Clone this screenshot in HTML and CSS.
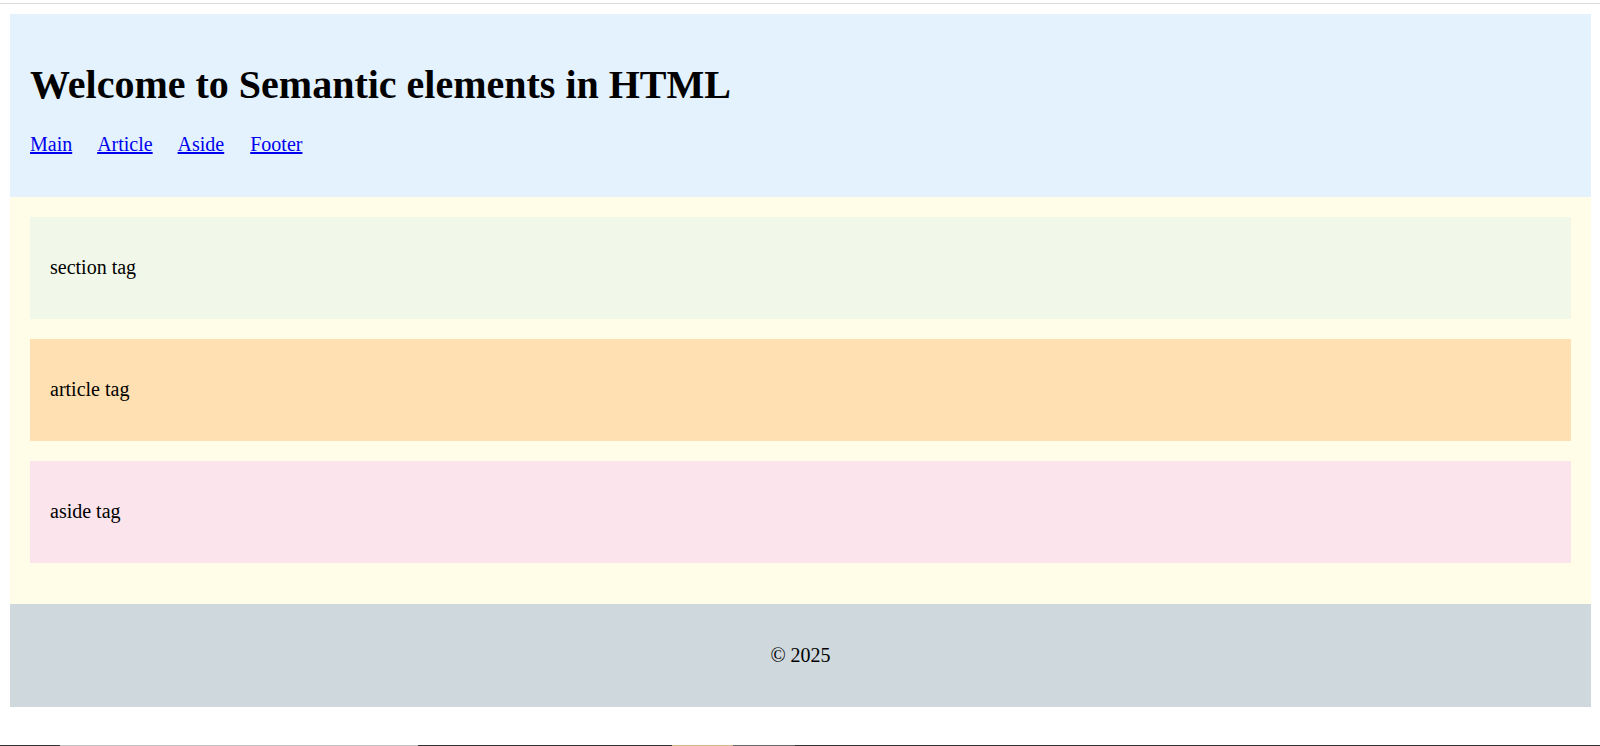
FILE: index.html
```html
<!DOCTYPE html>
<html lang="en">
<head>
<meta charset="utf-8">
<title>Semantic elements in HTML</title>
<link rel="stylesheet" href="styles.css">
</head>
<body>
<div class="topline"></div>
<div class="page">
  <header class="site-header">
    <h1 class="title">Welcome to Semantic elements in HTML</h1>
    <nav class="nav">
      <a href="#main" class="nav-link">Main</a>
      <a href="#article" class="nav-link">Article</a>
      <a href="#aside" class="nav-link">Aside</a>
      <a href="#footer" class="nav-link">Footer</a>
    </nav>
  </header>
  <main class="main" id="main">
    <section class="block block-section"><p class="block-text">section tag</p></section>
    <article class="block block-article" id="article"><p class="block-text">article tag</p></article>
    <aside class="block block-aside" id="aside"><p class="block-text">aside tag</p></aside>
  </main>
  <footer class="site-footer" id="footer"><p class="footer-text">&copy; 2025</p></footer>
</div>
<div class="taskbar-edge">
  <span class="seg seg-dark s1"></span><span class="seg seg-gray s2"></span><span class="seg seg-dark s3"></span><span class="seg seg-tan s4"></span><span class="seg seg-mid s5"></span><span class="seg seg-dark s6"></span>
</div>
</body>
</html>
```

FILE: styles.css
```css
html, body {
  margin: 0;
  padding: 0;
  background: #ffffff;
}
body {
  font-family: "Liberation Serif", "Times New Roman", serif;
  font-size: 20px;
  color: #000;
  height: 746px;
  overflow: hidden;
  position: relative;
}
.topline {
  height: 3px;
  border-bottom: 1px solid #dcdcdc;
}
.page {
  padding: 10px 9px 10px 10px;
}
.site-header {
  background: #e3f2fd;
  padding: 20px;
}
.title {
  font-size: 40px;
  font-weight: bold;
  margin: 26.8px 0 25px;
  line-height: normal;
}
.nav {
  margin: 0 0 21px;
}
.nav-link {
  color: #0000ee;
  text-decoration: underline;
  margin-right: 21px;
}
.main {
  display: block;
  background: #fffde7;
  padding: 20px 20px 41px;
}
.block {
  padding: 0 20px;
  margin-bottom: 20px;
  height: 102px;
  display: flex;
  align-items: center;
}
.block:last-child {
  margin-bottom: 0;
}
.block-text {
  margin: 0;
}
.block-section { background: #f1f8e9; }
.block-article { background: #ffe0b2; }
.block-aside { background: #fce4ec; }
.site-footer {
  background: #cfd8dc;
  padding: 20px;
  text-align: center;
}
.footer-text {
  margin: 20px 0;
}
.taskbar-edge {
  position: absolute;
  left: 0;
  right: 0;
  bottom: 0;
  height: 1px;
  display: flex;
}
.seg { display: block; height: 1px; }
.seg-dark { background: #333333; }
.seg-gray { background: #c4c4c4; }
.seg-tan { background: #d9b98a; }
.seg-mid { background: #6a6a6a; }
.s1 { width: 60px; }
.s2 { width: 358px; }
.s3 { width: 254px; }
.s4 { width: 61px; }
.s5 { width: 62px; }
.s6 { flex: 1; }
```
